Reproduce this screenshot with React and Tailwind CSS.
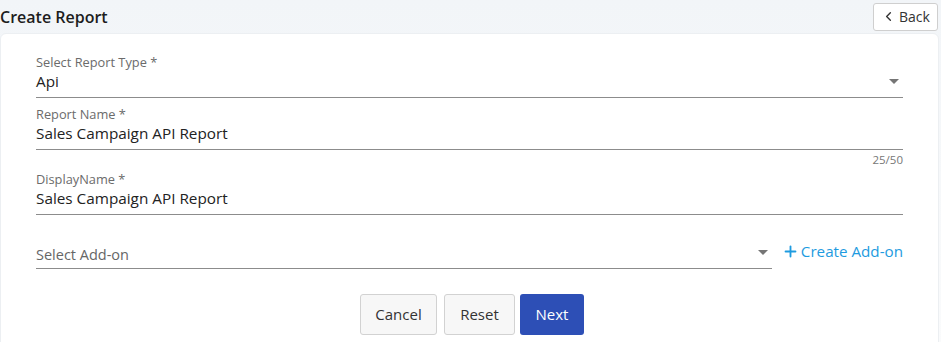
import React, { useState } from "react";
import { ChevronLeft, Plus } from "lucide-react";

const Caret = () => (
  <svg width="10" height="5" viewBox="0 0 10 5" className="shrink-0">
    <path d="M0 0h10L5 5z" fill="#757575" />
  </svg>
);

const Field = ({ label, value, select, counter }) => (
  <div className="flex flex-col">
    <label className="text-[12.8px] leading-[14px] text-[#6b6b6b]">{label}</label>
    <div className="flex h-[29px] items-center border-b border-[#8c8c8c] pb-[4px]">
      <span className="flex-1 text-[15.3px] text-[#222]">{value}</span>
      {select && <span className="mr-[4px]"><Caret /></span>}
    </div>
    {counter && (
      <div className="mt-[3px] text-right text-[11.5px] leading-[13px] text-[#777]">{counter}</div>
    )}
  </div>
);

const App = () => {
  const [reportName] = useState("Sales Campaign API Report");

  return (
    <div className="min-h-[342px] bg-gradient-to-b from-[#f2f5f8] to-[#fafbfc] font-['Open_Sans',sans-serif]">
      {/* Header */}
      <div className="flex h-[33px] items-center justify-between pr-[3px]">
        <h1 className="text-[16px] font-semibold text-[#1d1d1d]">Create Report</h1>
        <button className="flex h-[28px] w-[65px] items-center justify-center gap-[3px] rounded-[3px] border border-[#cfcfcf] bg-white text-[14px] text-[#333]">
          <ChevronLeft size={15} strokeWidth={2.2} />
          Back
        </button>
      </div>

      {/* Card */}
      <div className="mr-[2px] h-[320px] rounded-[6px] border border-[#eceff2] bg-white px-[35px] pt-[21px]">
        <Field label="Select Report Type *" value="Api" select />
        <div className="mt-[9px]">
          <Field label="Report Name *" value={reportName} counter={`${reportName.length}/50`} />
        </div>
        <div className="mt-[6px]">
          <Field label="DisplayName *" value="Sales Campaign API Report" />
        </div>

        {/* Add-on */}
        <div className="mt-[24px] flex items-end gap-[10px]">
          <div className="flex h-[30px] flex-1 items-center border-b border-[#8c8c8c] pt-[3px]">
            <span className="flex-1 text-[14.5px] text-[#666]">Select Add-on</span>
            <span className="mr-[4px] -mt-[6px]"><Caret /></span>
          </div>
          <button className="mb-[6px] flex w-[121px] items-center justify-between text-[15.2px] text-[#1e9be0]">
            <Plus size={17} strokeWidth={2.6} />
            Create Add-on
          </button>
        </div>

        {/* Actions */}
        <div className="mt-[25px] flex justify-center pl-[5px]">
          <button className="h-[41px] w-[77px] rounded-[3px] border border-[#d2d2d2] bg-[#f7f7f7] text-[15px] text-[#333]">
            Cancel
          </button>
          <button className="ml-[7px] h-[41px] w-[71px] rounded-[3px] border border-[#d2d2d2] bg-[#f7f7f7] text-[15px] text-[#333]">
            Reset
          </button>
          <button className="ml-[5px] h-[41px] w-[64px] rounded-[3px] bg-[#2d4fb6] text-[15px] font-medium text-white">
            Next
          </button>
        </div>
      </div>
    </div>
  );
};

export default App;
